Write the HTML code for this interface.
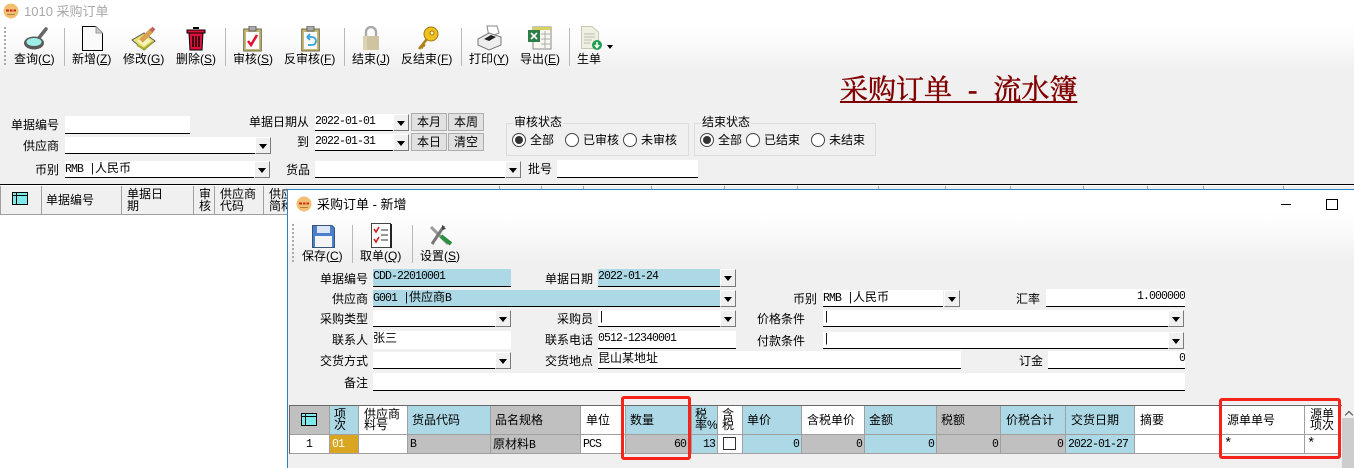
<!DOCTYPE html>
<html><head><meta charset="utf-8"><style>
html,body{margin:0;padding:0}
body{width:1354px;height:468px;position:relative;overflow:hidden;background:#f0f0f0;font:12px/14px "Liberation Sans","WenQuanYi Zen Hei","Noto Sans CJK SC",sans-serif;color:#000}
div,span.a,svg{position:absolute}
.t{white-space:nowrap}
.l{white-space:nowrap;text-align:right;width:90px}
.f{background:#fff;border-bottom:1px solid #000;box-sizing:border-box;font:11.5px/15px "Liberation Mono","WenQuanYi Zen Hei",monospace;letter-spacing:-.9px;white-space:nowrap;overflow:hidden}
.f span{font:12px/15px "Liberation Sans","WenQuanYi Zen Hei",sans-serif;letter-spacing:0}
.bl{background:#add8e6}
.b{width:16px;box-sizing:border-box;background:#f0f0f0;border:1px solid;border-color:#fff #7a7a7a #7a7a7a #fff}
.b:after{content:"";position:absolute;left:3px;top:6px;border:4px solid transparent;border-top:5px solid #000;border-bottom:0}
.s{width:1px;background:#b9b9b9}
.btn{width:36px;height:18px;box-sizing:border-box;background:#e1e1e1;border:1px solid #adadad;text-align:center;line-height:16px}
.rd{width:12px;height:12px;border:1px solid #444;border-radius:50%;background:#fff;box-sizing:content-box}
.rd.on:after{content:"";position:absolute;left:2px;top:2px;width:8px;height:8px;border-radius:50%;background:#333}
.g{border:1px solid #dcdcdc;box-sizing:border-box}
.h,.d{box-sizing:border-box;overflow:hidden;white-space:nowrap}
.h{top:406px;height:28px;line-height:28px;padding-left:4px}
.h.w{line-height:11px;padding:3px 0 0 4px;white-space:normal}
.d{top:435px;height:18px;padding:0 2px;font:11.5px/19px "Liberation Mono","WenQuanYi Zen Hei",monospace;letter-spacing:-.9px}
.d span{font:12px/18px "Liberation Sans","WenQuanYi Zen Hei",sans-serif;letter-spacing:0}
.gy{background:#c0c0c0}.wh{background:#fff}.r{text-align:right}
.v{width:1px;background:#a0a0a0}
.red{border:3px solid #f5231a;border-radius:3px;box-sizing:border-box}
</style></head><body>

<div style="left:0;top:0;width:1354px;height:23px;background:#fff"></div>
<div style="left:0;top:23px;width:1354px;height:47px;background:linear-gradient(#fff,#fafafa 45%,#f0f0f0)"></div>
<svg style="left:3px;top:3px" width="16" height="16" viewBox="0 0 16 16"><circle cx="8" cy="8" r="7.5" fill="#f0c070"/><path d="M3 7.5H6M7 7.5H9.5M10.5 7.5H13" stroke="#c8281e" stroke-width="2"/><rect x="4" y="11" width="8" height="1" fill="#b08040"/></svg>
<div class="t" style="left:24px;top:4px;color:#a8a8a8;font-size:13px;line-height:15px">1010 采购订单</div>

<div style="left:4px;top:27px;width:2px;height:40px;background:repeating-linear-gradient(#aaa 0 2px,transparent 2px 4px)"></div>
<div class="s" style="left:64px;top:28px;height:38px"></div>
<div class="s" style="left:225px;top:28px;height:38px"></div>
<div class="s" style="left:344px;top:28px;height:38px"></div>
<div class="s" style="left:461px;top:28px;height:38px"></div>
<div class="s" style="left:569px;top:28px;height:38px"></div>

<!-- main toolbar icons -->
<svg style="left:22px;top:26px" width="27" height="26" viewBox="0 0 27 26"><path d="M16 13L24 3" stroke="#666" stroke-width="3.5" stroke-linecap="round"/><ellipse cx="12" cy="17" rx="10" ry="6.5" fill="#5a5a5a"/><ellipse cx="12" cy="16" rx="7.5" ry="4" fill="#9eeee8"/></svg>
<svg style="left:82px;top:26px" width="21" height="25" viewBox="0 0 21 25"><path d="M.5.5H14L20.5 7V24.5H.5Z" fill="#fafafa" stroke="#000"/><path d="M14 .5V7H20.5Z" fill="#ccc" stroke="#999"/></svg>
<svg style="left:131px;top:26px" width="26" height="26" viewBox="0 0 26 26"><path d="M1 14L13 7L24 15L13 24Z" fill="#e8e070" stroke="#555"/><path d="M6 15L13 10L20 15L13 20Z" fill="#f6f6c0"/><path d="M10 15L21 4" stroke="#d8a050" stroke-width="5"/><path d="M20 5L23 2" stroke="#c06060" stroke-width="4"/><path d="M6 19L13 23L22 16" stroke="#a8a830" stroke-width="2" fill="none"/></svg>
<svg style="left:186px;top:27px" width="20" height="24" viewBox="0 0 20 24"><path d="M3 6H17L16 23H4Z" fill="#e0103c" stroke="#000"/><rect x="1" y="3" width="18" height="3" fill="#e0103c" stroke="#000"/><path d="M7 1H13" stroke="#000" stroke-width="2"/><path d="M7 9V20M10 9V20M13 9V20" stroke="#000" stroke-width="1.4"/></svg>
<svg style="left:243px;top:26px" width="19" height="26" viewBox="0 0 19 26"><rect x=".7" y="3" width="17.6" height="22" fill="#c8b878" stroke="#6a6a40"/><rect x="3" y="6" width="13" height="17" fill="#fbfbfb"/><rect x="6" y="0" width="7" height="5" fill="#aaa" stroke="#666"/><path d="M5 15L8 19L14 9" stroke="#e01030" stroke-width="2.5" fill="none"/></svg>
<svg style="left:301px;top:26px" width="19" height="26" viewBox="0 0 19 26"><rect x=".7" y="3" width="17.6" height="22" fill="#c8b878" stroke="#6a6a40"/><rect x="3" y="6" width="13" height="17" fill="#fbfbfb"/><rect x="6" y="0" width="7" height="5" fill="#aaa" stroke="#666"/><path d="M6 11H11A4 4 0 0 1 11 19H7M6 11L9 8M6 11L9 14" stroke="#30a0e0" stroke-width="1.8" fill="none"/></svg>
<svg style="left:362px;top:26px" width="18" height="24" viewBox="0 0 18 24"><path d="M4 11V6A5 5 0 0 1 14 6V11" stroke="#aaa" stroke-width="2.4" fill="none"/><rect x="1" y="10" width="16" height="14" fill="#cfc3a0"/><rect x="1" y="10" width="4" height="14" fill="#dcd2b4"/></svg>
<svg style="left:417px;top:26px" width="22" height="25" viewBox="0 0 22 25"><path d="M10 13L2 23M3 20L6 22M5 18L8 20" stroke="#b08018" stroke-width="2.6" fill="none"/><circle cx="14" cy="8" r="7" fill="#f0c020" stroke="#a07a10"/><circle cx="15" cy="7" r="2" fill="#fff4b0" stroke="#a07a10"/></svg>
<svg style="left:477px;top:25px" width="25" height="26" viewBox="0 0 25 26"><path d="M10 1L20 1L22 8L12 12Z" fill="#fff" stroke="#888"/><path d="M1 14L12 8L24 12V20L12 25L1 20Z" fill="#eee" stroke="#777"/><path d="M7 14L14 10L19 12L12 16Z" fill="#222"/></svg>
<svg style="left:527px;top:26px" width="25" height="24" viewBox="0 0 25 24"><rect x="6" y="1" width="18" height="22" fill="#f8f8f0" stroke="#888"/><rect x="6" y="1" width="18" height="3" fill="#d8d060"/><path d="M14 8H23M14 13H23M14 18H23M18 5V22" stroke="#aaa"/><rect x="1" y="4" width="12" height="12" fill="#2e7d46"/><path d="M4 7L10 13M10 7L4 13" stroke="#fff" stroke-width="1.6"/></svg>
<svg style="left:581px;top:26px" width="22" height="24" viewBox="0 0 22 24"><path d="M.5.5H11L17.5 6V22.5H.5Z" fill="#f0f0e2" stroke="#c8c8b0"/><path d="M3 8H14M3 11H14M3 14H11M3 17H9" stroke="#bbb"/><circle cx="16" cy="19" r="5" fill="#1e9e50"/><path d="M16 16V21M13.8 19L16 21.5L18.2 19" stroke="#fff" stroke-width="1.5" fill="none"/></svg>
<div style="left:607px;top:45px;border:3px solid transparent;border-top:4px solid #000;border-bottom:0"></div>

<div class="t" style="left:14px;top:52px">查询(<u>C</u>)</div>
<div class="t" style="left:72px;top:52px">新增(<u>Z</u>)</div>
<div class="t" style="left:123px;top:52px">修改(<u>G</u>)</div>
<div class="t" style="left:176px;top:52px">删除(<u>S</u>)</div>
<div class="t" style="left:233px;top:52px">审核(<u>S</u>)</div>
<div class="t" style="left:284px;top:52px">反审核(<u>F</u>)</div>
<div class="t" style="left:352px;top:52px">结束(<u>J</u>)</div>
<div class="t" style="left:401px;top:52px">反结束(<u>F</u>)</div>
<div class="t" style="left:469px;top:52px">打印(<u>Y</u>)</div>
<div class="t" style="left:520px;top:52px">导出(<u>E</u>)</div>
<div class="t" style="left:577px;top:52px">生单</div>

<div class="t" style="left:840px;top:74px;font:400 28px/34px 'Liberation Serif','Noto Serif CJK SC',serif;word-spacing:9px;color:#800000;text-decoration:underline;-webkit-text-stroke:.5px #800000">采购订单 - 流水簿</div>

<!-- top filter form -->
<div class="l" style="left:-31px;top:118px">单据编号</div>
<div class="f" style="left:65px;top:116px;width:125px;height:18px"></div>
<div class="l" style="left:-31px;top:139px">供应商</div>
<div class="f" style="left:65px;top:137px;width:190px;height:17px"></div><div class="b" style="left:255px;top:137px;height:17px"></div>
<div class="l" style="left:-31px;top:163px">币别</div>
<div class="f" style="left:65px;top:161px;width:189px;height:17px">RMB |<span>人民币</span></div><div class="b" style="left:254px;top:161px;height:17px"></div>
<div class="t" style="left:286px;top:163px">货品</div>
<div class="f" style="left:315px;top:161px;width:190px;height:17px"></div><div class="b" style="left:505px;top:161px;height:17px"></div>
<div class="t" style="left:528px;top:162px">批号</div>
<div class="f" style="left:557px;top:160px;width:141px;height:18px"></div>

<div class="t" style="left:249px;top:115px">单据日期从</div>
<div class="f" style="left:315px;top:114px;width:78px;height:17px">2022-01-01</div><div class="b" style="left:393px;top:114px;height:17px"></div>
<div class="t" style="left:297px;top:135px">到</div>
<div class="f" style="left:315px;top:134px;width:78px;height:17px">2022-01-31</div><div class="b" style="left:393px;top:134px;height:17px"></div>
<div class="btn" style="left:411px;top:113px">本月</div><div class="btn" style="left:448px;top:113px">本周</div>
<div class="btn" style="left:411px;top:133px">本日</div><div class="btn" style="left:448px;top:133px">清空</div>

<div class="g" style="left:506px;top:123px;width:183px;height:33px"></div>
<div class="t" style="left:513px;top:115px;background:#f0f0f0;padding:0 1px">审核状态</div>
<div class="rd on" style="left:512px;top:133px"></div><div class="t" style="left:530px;top:133px">全部</div>
<div class="rd" style="left:565px;top:133px"></div><div class="t" style="left:583px;top:133px">已审核</div>
<div class="rd" style="left:623px;top:133px"></div><div class="t" style="left:641px;top:133px">未审核</div>

<div class="g" style="left:694px;top:123px;width:182px;height:33px"></div>
<div class="t" style="left:701px;top:115px;background:#f0f0f0;padding:0 1px">结束状态</div>
<div class="rd on" style="left:700px;top:133px"></div><div class="t" style="left:718px;top:133px">全部</div>
<div class="rd" style="left:746px;top:133px"></div><div class="t" style="left:764px;top:133px">已结束</div>
<div class="rd" style="left:811px;top:133px"></div><div class="t" style="left:829px;top:133px">未结束</div>

<!-- main grid -->
<div style="left:0;top:184px;width:1354px;height:1px;background:#000"></div>
<div style="left:0;top:185px;width:1354px;height:1px;background:#fff"></div>
<div style="left:0;top:214px;width:1354px;height:254px;background:#fff"></div>
<div style="left:0;top:214px;width:288px;height:1px;background:#a0a0a0"></div>
<div style="left:0;top:186px;width:1px;height:28px;background:#a0a0a0"></div>
<div class="v" style="left:41px;top:186px;height:28px"></div>
<div class="v" style="left:121px;top:186px;height:28px"></div>
<div class="v" style="left:193px;top:186px;height:28px"></div>
<div class="v" style="left:214px;top:186px;height:28px"></div>
<div class="v" style="left:263px;top:186px;height:28px"></div>
<div class="v" style="left:499px;top:186px;height:3px"></div><div class="v" style="left:541px;top:186px;height:3px"></div><div class="v" style="left:583px;top:186px;height:3px"></div><div class="v" style="left:651px;top:186px;height:3px"></div><div class="v" style="left:724px;top:186px;height:3px"></div><div class="v" style="left:797px;top:186px;height:3px"></div><div class="v" style="left:878px;top:186px;height:3px"></div><div class="v" style="left:945px;top:186px;height:3px"></div><div class="v" style="left:1010px;top:186px;height:3px"></div><div class="v" style="left:1083px;top:186px;height:3px"></div><div class="v" style="left:1147px;top:186px;height:3px"></div><div class="v" style="left:1203px;top:186px;height:3px"></div><div class="v" style="left:1283px;top:186px;height:3px"></div>
<svg style="left:12px;top:192px" width="16" height="13" viewBox="0 0 16 13"><rect x=".5" y=".5" width="15" height="12" fill="#7fe8e8" stroke="#000"/><path d="M0 3.5H16M4.5 0V13" stroke="#000"/></svg>
<div class="t" style="left:46px;top:193px">单据编号</div>
<div class="t" style="left:127px;top:188px;line-height:12px">单据日<br>期</div>
<div class="t" style="left:199px;top:188px;line-height:12px">审<br>核</div>
<div class="t" style="left:220px;top:188px;line-height:12px">供应商<br>代码</div>
<div class="t" style="left:269px;top:188px;line-height:12px;width:18px;overflow:hidden">供应商<br>简称</div>

<!-- sub window -->
<div style="left:288px;top:189px;width:1066px;height:279px;background:#f0f0f0"></div>
<div style="left:288px;top:213px;width:1066px;height:47px;background:linear-gradient(#fff,#fafafa 45%,#f0f0f0)"></div>
<div style="left:288px;top:189px;width:1066px;height:24px;background:#fff"></div>
<div style="left:287px;top:189px;width:1067px;height:1px;background:#2b82c9"></div>
<div style="left:287px;top:189px;width:1px;height:279px;background:#2b82c9"></div>
<svg style="left:296px;top:196px" width="16" height="16" viewBox="0 0 16 16"><circle cx="8" cy="8" r="7.5" fill="#f0c070"/><path d="M3 7.5H6M7 7.5H9.5M10.5 7.5H13" stroke="#c8281e" stroke-width="2"/><rect x="4" y="11" width="8" height="1" fill="#b08040"/></svg>
<div class="t" style="left:317px;top:197px;font-size:13px;line-height:15px">采购订单 - 新增</div>
<div style="left:1281px;top:204px;width:10px;height:1px;background:#000"></div>
<div style="left:1326px;top:199px;width:10px;height:9px;border:1px solid #000"></div>

<div style="left:292px;top:224px;width:2px;height:38px;background:repeating-linear-gradient(#aaa 0 2px,transparent 2px 4px)"></div>
<div class="s" style="left:352px;top:225px;height:38px"></div>
<div class="s" style="left:412px;top:225px;height:38px"></div>
<svg style="left:312px;top:224px" width="23" height="24" viewBox="0 0 23 24"><path d="M.5 1.5H20L22.5 4V23.5H.5Z" fill="#4a7fd0" stroke="#357"/><rect x="5" y="2" width="13" height="7" fill="#dce6f5"/><rect x="3" y="12" width="17" height="11" fill="#f4f4f4"/></svg>
<svg style="left:371px;top:223px" width="21" height="25" viewBox="0 0 21 25"><rect x=".5" y=".5" width="19" height="24" fill="#fdfdfd" stroke="#444"/><rect x="19" y="1" width="2" height="24" fill="#222"/><path d="M3 6L5 9L8 4M3 16L5 19L8 14" stroke="#d02020" stroke-width="1.6" fill="none"/><path d="M10 7H17M10 12H17M10 17H17" stroke="#777" stroke-width="1.4"/></svg>
<svg style="left:428px;top:224px" width="24" height="24" viewBox="0 0 24 24"><path d="M3 3L20 20" stroke="#999" stroke-width="3"/><path d="M16 2L4 20" stroke="#777" stroke-width="3"/><path d="M13 12L23 20" stroke="#2a9040" stroke-width="4"/><path d="M14 1L18 5L14 6Z" fill="#444"/></svg>
<div class="t" style="left:302px;top:249px">保存(<u>C</u>)</div>
<div class="t" style="left:360px;top:249px">取单(<u>Q</u>)</div>
<div class="t" style="left:420px;top:249px">设置(<u>S</u>)</div>

<!-- form -->
<div class="l" style="left:278px;top:272px">单据编号</div>
<div class="f bl" style="left:373px;top:269px;width:138px;height:18px">CDD-22010001</div>
<div class="t" style="left:545px;top:272px">单据日期</div>
<div class="f bl" style="left:598px;top:269px;width:122px;height:18px">2022-01-24</div><div class="b" style="left:720px;top:269px;height:18px"></div>
<div class="l" style="left:278px;top:292px">供应商</div>
<div class="f bl" style="left:373px;top:290px;width:347px;height:17px">G001 |<span>供应商</span>B</div><div class="b" style="left:720px;top:290px;height:17px"></div>
<div class="t" style="left:793px;top:292px">币别</div>
<div class="f" style="left:823px;top:290px;width:120px;height:17px">RMB |<span>人民币</span></div><div class="b" style="left:944px;top:290px;height:17px"></div>
<div class="t" style="left:1016px;top:292px">汇率</div>
<div class="f" style="left:1046px;top:289px;width:139px;height:18px;text-align:right">1.000000</div>

<div class="l" style="left:278px;top:312px">采购类型</div>
<div class="f" style="left:373px;top:310px;width:122px;height:17px"></div><div class="b" style="left:495px;top:310px;height:17px"></div>
<div class="t" style="left:557px;top:312px">采购员</div>
<div class="f" style="left:598px;top:310px;width:122px;height:17px">|</div><div class="b" style="left:720px;top:310px;height:17px"></div>
<div class="t" style="left:757px;top:312px">价格条件</div>
<div class="f" style="left:823px;top:310px;width:345px;height:17px">|</div><div class="b" style="left:1168px;top:310px;height:17px"></div>

<div class="l" style="left:278px;top:333px">联系人</div>
<div class="f" style="left:373px;top:331px;width:138px;height:18px;border-bottom-color:#fff"><span>张三</span></div>
<div class="t" style="left:545px;top:333px">联系电话</div>
<div class="f" style="left:598px;top:331px;width:138px;height:18px">0512-12340001</div>
<div class="t" style="left:757px;top:334px">付款条件</div>
<div class="f" style="left:823px;top:332px;width:345px;height:17px">|</div><div class="b" style="left:1168px;top:332px;height:17px"></div>

<div class="l" style="left:278px;top:354px">交货方式</div>
<div class="f" style="left:373px;top:352px;width:122px;height:17px"></div><div class="b" style="left:495px;top:352px;height:17px"></div>
<div class="t" style="left:545px;top:354px">交货地点</div>
<div class="f" style="left:598px;top:351px;width:363px;height:18px"><span>昆山某地址</span></div>
<div class="t" style="left:1019px;top:354px">订金</div>
<div class="f" style="left:1048px;top:351px;width:137px;height:18px;text-align:right">0</div>

<div class="l" style="left:278px;top:376px">备注</div>
<div class="f" style="left:373px;top:373px;width:812px;height:18px"></div>

<!-- detail grid -->
<div style="left:289px;top:405px;width:1053px;height:1px;background:#696969"></div>
<div style="left:289px;top:405px;width:1px;height:49px;background:#696969"></div>
<div style="left:290px;top:406px;width:1049px;height:48px;background:#a0a0a0"></div>

<div class="h gy" style="left:290px;width:39px"></div>
<svg style="left:301px;top:413px" width="16" height="13" viewBox="0 0 16 13"><rect x=".5" y=".5" width="15" height="12" fill="#7fe8e8" stroke="#000"/><path d="M0 3.5H16M4.5 0V13" stroke="#000"/><path d="M-1 13.5H17" stroke="#fff"/></svg>
<div class="h w bl" style="left:330px;width:28px">项<br>次</div>
<div class="h w wh" style="left:359px;width:48px;padding-left:5px">供应商<br>料号</div>
<div class="h bl" style="left:408px;width:82px">货品代码</div>
<div class="h gy" style="left:491px;width:89px">品名规格</div>
<div class="h wh" style="left:581px;width:44px;padding-left:5px">单位</div>
<div class="h bl" style="left:626px;width:65px">数量</div>
<div class="h w bl" style="left:692px;width:25px;padding-left:3px">税<br>率%</div>
<div class="h w wh" style="left:718px;width:24px;padding-left:4px">含<br>税</div>
<div class="h bl" style="left:743px;width:58px">单价</div>
<div class="h wh" style="left:802px;width:62px;padding-left:5px">含税单价</div>
<div class="h bl" style="left:865px;width:71px">金额</div>
<div class="h gy" style="left:937px;width:63px">税额</div>
<div class="h bl" style="left:1001px;width:64px;padding-left:5px">价税合计</div>
<div class="h bl" style="left:1066px;width:68px;padding-left:5px">交货日期</div>
<div class="h wh" style="left:1135px;width:86px;padding-left:5px">摘要</div>
<div class="h wh" style="left:1222px;width:82px;padding-left:5px">源单单号</div>
<div class="h w wh" style="left:1305px;width:33px;padding-left:5px">源单<br>项次</div>

<div class="d wh" style="left:290px;width:39px;padding-left:16px">1</div>
<div class="d" style="left:330px;width:28px;background:#daa520;color:#fff">01</div>
<div class="d wh" style="left:359px;width:48px"></div>
<div class="d gy" style="left:408px;width:82px">B</div>
<div class="d gy" style="left:491px;width:89px"><span>原材料</span>B</div>
<div class="d wh" style="left:581px;width:44px">PCS</div>
<div class="d gy r" style="left:626px;width:65px;padding-right:5px">60</div>
<div class="d bl r" style="left:692px;width:25px">13</div>
<div class="d wh" style="left:718px;width:24px"></div>
<div style="left:723px;top:437px;width:13px;height:13px;border:1px solid #333;box-sizing:border-box;background:#fff"></div>
<div class="d bl r" style="left:743px;width:58px">0</div>
<div class="d gy r" style="left:802px;width:62px">0</div>
<div class="d bl r" style="left:865px;width:71px">0</div>
<div class="d gy r" style="left:937px;width:63px">0</div>
<div class="d gy r" style="left:1001px;width:64px">0</div>
<div class="d bl" style="left:1066px;width:68px">2022-01-27</div>
<div class="d wh" style="left:1135px;width:86px"></div>
<div class="d wh" style="left:1222px;width:82px;font-size:14px">*</div>
<div class="d wh" style="left:1305px;width:33px;font-size:14px">*</div>

<div style="left:1342px;top:406px;width:12px;height:12px;background:#f0f0f0"></div>
<div style="left:1342px;top:418px;width:12px;height:50px;background:#cdcdcd"></div>
<div style="left:1346px;top:412px;width:5px;height:5px;border-left:1.5px solid #444;border-top:1.5px solid #444;transform:rotate(45deg)"></div>

<div class="red" style="left:621px;top:396px;width:70px;height:64px"></div>
<div class="red" style="left:1219px;top:398px;width:122px;height:61px"></div>
</body></html>
